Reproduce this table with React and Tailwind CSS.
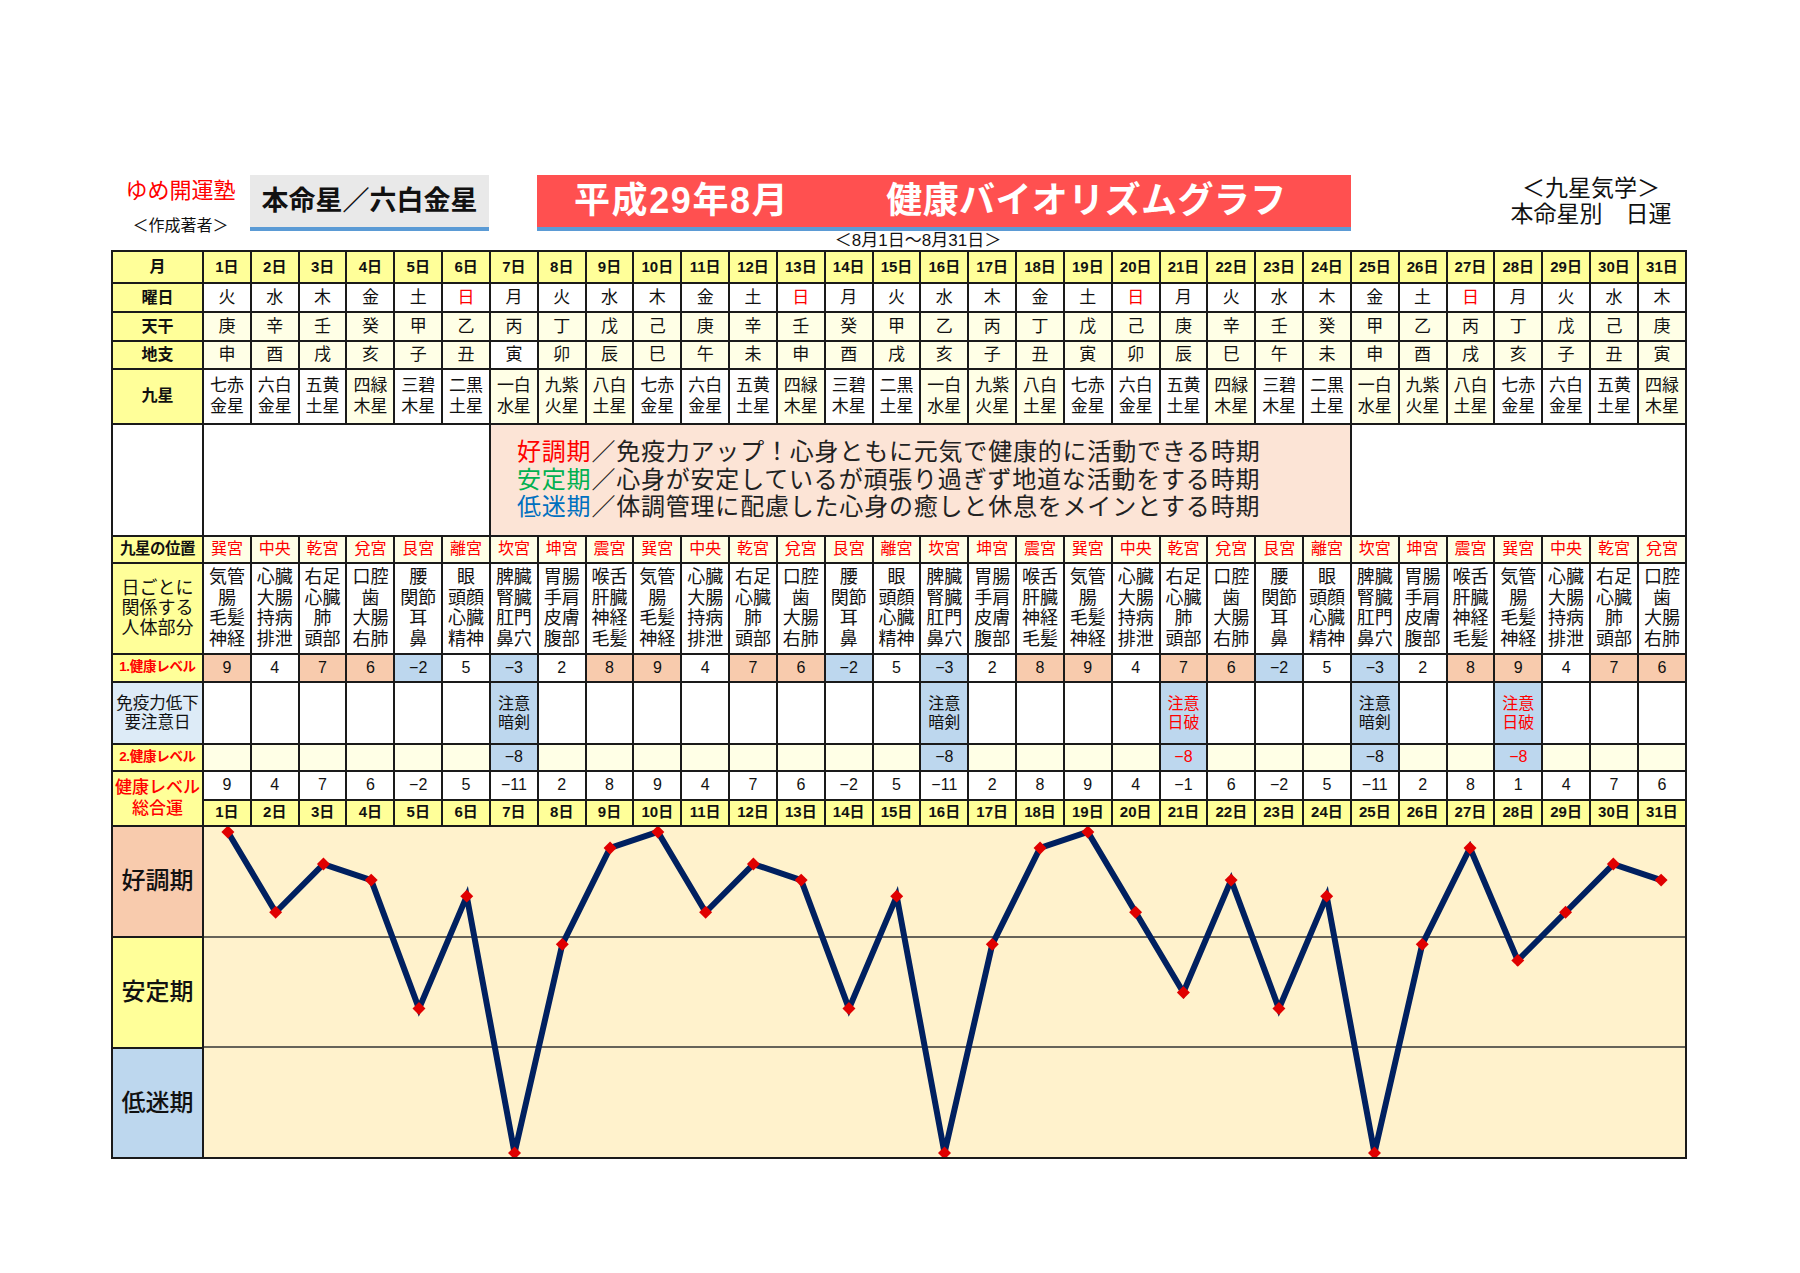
import React from "react";

const days = Array.from({ length: 31 }, (_, i) => i + 1);
const youbi = ["火", "水", "木", "金", "土", "日", "月"];
const kan = ["庚", "辛", "壬", "癸", "甲", "乙", "丙", "丁", "戊", "己"];
const shi = ["申", "酉", "戌", "亥", "子", "丑", "寅", "卯", "辰", "巳", "午", "未"];
const stars = [
  ["七赤", "金星"],
  ["六白", "金星"],
  ["五黄", "土星"],
  ["四緑", "木星"],
  ["三碧", "木星"],
  ["二黒", "土星"],
  ["一白", "水星"],
  ["九紫", "火星"],
  ["八白", "土星"],
];
const paleStars = [3, 6, 7, 8];
const palaces = ["巽宮", "中央", "乾宮", "兌宮", "艮宮", "離宮", "坎宮", "坤宮", "震宮"];
const parts = [
  ["気管", "腸", "毛髪", "神経"],
  ["心臓", "大腸", "持病", "排泄"],
  ["右足", "心臓", "肺", "頭部"],
  ["口腔", "歯", "大腸", "右肺"],
  ["腰", "関節", "耳", "鼻"],
  ["眼", "頭顔", "心臓", "精神"],
  ["脾臓", "腎臓", "肛門", "鼻穴"],
  ["胃腸", "手肩", "皮膚", "腹部"],
  ["喉舌", "肝臓", "神経", "毛髪"],
];
const level1 = [9, 4, 7, 6, -2, 5, -3, 2, 8];
const notices = {
  7: { a: "注意", b: "暗剣", red: false },
  16: { a: "注意", b: "暗剣", red: false },
  21: { a: "注意", b: "日破", red: true },
  25: { a: "注意", b: "暗剣", red: false },
  28: { a: "注意", b: "日破", red: true },
};

const fmt = (v) => (v < 0 ? "−" + Math.abs(v) : String(v));

const cell = "border-2 border-[#1a1a1a] p-0 text-center align-middle";

const HealthChart = () => {
  const w = 1485;
  const h = 333;
  const colW = w / 31;
  const pts = days.map((d) => {
    const v = level1[(d - 1) % 9] + (notices[d] ? -8 : 0);
    return [(d - 0.5) * colW, 5 + (9 - v) * 16.2];
  });

  return (
    <svg
      className="absolute inset-0 w-full h-full"
      viewBox={`0 0 ${w} ${h}`}
      preserveAspectRatio="none"
    >
      <line x1="0" y1="111" x2={w} y2="111" stroke="#333" strokeWidth="1.5" />
      <line x1="0" y1="222" x2={w} y2="222" stroke="#333" strokeWidth="1.5" />
      <polyline
        points={pts.map((p) => p.join(",")).join(" ")}
        fill="none"
        stroke="#002060"
        strokeWidth="6"
        strokeLinejoin="miter"
      />
      {pts.map(([x, y], i) => (
        <polygon
          key={i}
          points={`${x},${y - 6.5} ${x + 6.5},${y} ${x},${y + 6.5} ${x - 6.5},${y}`}
          fill="#e00000"
        />
      ))}
    </svg>
  );
};

const App = () => {
  return (
    <div className="w-[1800px] h-[1273px] bg-white font-['Liberation_Sans','Noto_Sans_CJK_JP',sans-serif] text-[#111]">
      <div className="w-[1576px] ml-[111px] pt-[175px]">
        {/* header */}
        <div className="flex items-start h-[56px]">
          <div className="w-[139px] flex flex-col items-center">
            <div className="mt-[4px] text-[22px] leading-[24px] text-[#ff0000]">ゆめ開運塾</div>
            <div className="mt-[14px] text-[16px] leading-[18px]">＜作成著者＞</div>
          </div>
          <div className="w-[239px] h-[56px] bg-[#e9e9e9] border-b-[4px] border-[#5b9bd5] flex items-center justify-center text-[27px] font-bold">
            本命星／六白金星
          </div>
          <div className="ml-[48px] w-[814px] h-[56px] bg-[#ff5050] border-b-[4px] border-[#5b9bd5] flex items-center pl-[37px] text-white text-[36px] font-bold">
            <span className="tracking-[1.6px]">平成29年8月</span>
            <span className="ml-[97px] tracking-[0.4px]">健康バイオリズムグラフ</span>
          </div>
          <div className="ml-[145px] w-[190px] text-center text-[23px] leading-[26px]">
            <div>＜九星気学＞</div>
            <div>本命星別　日運</div>
          </div>
        </div>
        <div className="h-[19px] pl-[38px] text-center text-[17px] leading-[19px]">
          ＜8月1日～8月31日＞
        </div>

        {/* table */}
        <table className="w-[1576px] table-fixed border-collapse border-2 border-[#1a1a1a]">
          <colgroup>
            <col className="w-[91px]" />
            {days.map((d) => (
              <col key={d} />
            ))}
          </colgroup>
          <tbody>
            <tr>
              <td className={`${cell} h-[32px] bg-[#ffff99] text-[16px] font-bold`}>月</td>
              {days.map((d) => (
                <td key={d} className={`${cell} bg-[#ffff99] text-[15px] font-bold`}>
                  {d}日
                </td>
              ))}
            </tr>
            <tr>
              <td className={`${cell} h-[29px] bg-[#ffff99] text-[16px] font-bold`}>曜日</td>
              {days.map((d) => {
                const y = youbi[(d - 1) % 7];
                return (
                  <td
                    key={d}
                    className={`${cell} bg-white text-[17px] ${y === "日" ? "text-[#ff0000]" : ""}`}
                  >
                    {y}
                  </td>
                );
              })}
            </tr>
            <tr>
              <td className={`${cell} h-[29px] bg-[#ffff99] text-[16px] font-bold`}>天干</td>
              {days.map((d) => (
                <td key={d} className={`${cell} bg-[#ffffe6] text-[17px]`}>
                  {kan[(d - 1) % 10]}
                </td>
              ))}
            </tr>
            <tr>
              <td className={`${cell} h-[27px] bg-[#ffff99] text-[16px] font-bold`}>地支</td>
              {days.map((d) => (
                <td
                  key={d}
                  className={`${cell} text-[17px] ${d === 7 ? "bg-white" : "bg-[#ffffe6]"}`}
                >
                  {shi[(d - 1) % 12]}
                </td>
              ))}
            </tr>
            <tr>
              <td className={`${cell} h-[55px] bg-[#ffff99] text-[16px] font-bold`}>九星</td>
              {days.map((d) => {
                const i = (d - 1) % 9;
                return (
                  <td
                    key={d}
                    className={`${cell} text-[17px] leading-[21px] ${
                      paleStars.includes(i) ? "bg-[#ffffe6]" : "bg-white"
                    }`}
                  >
                    <div>{stars[i][0]}</div>
                    <div>{stars[i][1]}</div>
                  </td>
                );
              })}
            </tr>
            <tr>
              <td className={`${cell} h-[112px] bg-white`}></td>
              <td colSpan={6} className={`${cell} bg-white`}></td>
              <td colSpan={18} className={`${cell} bg-[#fce4d6] text-left`}>
                <div className="pl-[26px] text-[24px] leading-[27.5px] tracking-[0.8px] text-[#222]">
                  <div>
                    <span className="text-[#ff0000]">好調期</span>／免疫力アップ！心身ともに元気で健康的に活動できる時期
                  </div>
                  <div>
                    <span className="text-[#00b050]">安定期</span>／心身が安定しているが頑張り過ぎず地道な活動をする時期
                  </div>
                  <div>
                    <span className="text-[#0070c0]">低迷期</span>／体調管理に配慮した心身の癒しと休息をメインとする時期
                  </div>
                </div>
              </td>
              <td colSpan={7} className={`${cell} bg-white`}></td>
            </tr>
            <tr>
              <td className={`${cell} h-[27px] bg-[#ffff99] text-[15.5px] font-bold tracking-[-0.5px]`}>
                九星の位置
              </td>
              {days.map((d) => (
                <td key={d} className={`${cell} bg-[#ffffe6] text-[16px] text-[#ff0000]`}>
                  {palaces[(d - 1) % 9]}
                </td>
              ))}
            </tr>
            <tr>
              <td className={`${cell} h-[91px] bg-[#ffff99] text-[18px] leading-[20px]`}>
                <div>日ごとに</div>
                <div>関係する</div>
                <div>人体部分</div>
              </td>
              {days.map((d) => (
                <td key={d} className={`${cell} bg-white text-[18px] leading-[20.5px]`}>
                  {parts[(d - 1) % 9].map((p, i) => (
                    <div key={i}>{p}</div>
                  ))}
                </td>
              ))}
            </tr>
            <tr>
              <td className={`${cell} h-[28px] bg-[#ffff99] text-[13.5px] font-bold text-[#ff0000] tracking-[-0.3px]`}>
                1.健康レベル
              </td>
              {days.map((d) => {
                const v = level1[(d - 1) % 9];
                const bg = v >= 6 ? "bg-[#f8cbad]" : v < 0 ? "bg-[#bdd7ee]" : "bg-white";
                return (
                  <td key={d} className={`${cell} ${bg} text-[16px]`}>
                    {fmt(v)}
                  </td>
                );
              })}
            </tr>
            <tr>
              <td className={`${cell} h-[62px] bg-[#ddebf7] text-[16.5px] leading-[19px]`}>
                <div>免疫力低下</div>
                <div>要注意日</div>
              </td>
              {days.map((d) => {
                const n = notices[d];
                return (
                  <td
                    key={d}
                    className={`${cell} text-[16px] leading-[19px] ${
                      n ? "bg-[#bdd7ee]" : "bg-white"
                    } ${n && n.red ? "text-[#ff0000]" : ""}`}
                  >
                    {n && (
                      <>
                        <div>{n.a}</div>
                        <div>{n.b}</div>
                      </>
                    )}
                  </td>
                );
              })}
            </tr>
            <tr>
              <td className={`${cell} h-[27px] bg-[#ffff99] text-[13.5px] font-bold text-[#ff0000] tracking-[-0.3px]`}>
                2.健康レベル
              </td>
              {days.map((d) => {
                const n = notices[d];
                return (
                  <td
                    key={d}
                    className={`${cell} text-[16px] ${n ? "bg-[#bdd7ee]" : "bg-[#ffffe6]"} ${
                      n && n.red ? "text-[#ff0000]" : ""
                    }`}
                  >
                    {n ? "−8" : ""}
                  </td>
                );
              })}
            </tr>
            <tr>
              <td
                rowSpan={2}
                className={`${cell} bg-[#ffff99] text-[17px] leading-[21px] font-medium text-[#ff0000]`}
              >
                <div>健康レベル</div>
                <div>総合運</div>
              </td>
              {days.map((d) => {
                const v = level1[(d - 1) % 9] + (notices[d] ? -8 : 0);
                return (
                  <td key={d} className={`${cell} h-[29px] bg-white text-[16px]`}>
                    {fmt(v)}
                  </td>
                );
              })}
            </tr>
            <tr>
              {days.map((d) => (
                <td key={d} className={`${cell} h-[26px] bg-[#ffff99] text-[15px] font-bold`}>
                  {d}日
                </td>
              ))}
            </tr>
            <tr>
              <td className={`${cell} h-[111px] bg-[#f8cbad] text-[24px] font-medium`}>好調期</td>
              <td colSpan={31} rowSpan={3} className={`${cell} relative bg-[#fff2cc]`}>
                <HealthChart />
              </td>
            </tr>
            <tr>
              <td className={`${cell} h-[111px] bg-[#ffff99] text-[24px] font-medium`}>安定期</td>
            </tr>
            <tr>
              <td className={`${cell} h-[110px] bg-[#bdd7ee] text-[24px] font-medium`}>低迷期</td>
            </tr>
          </tbody>
        </table>
      </div>
    </div>
  );
};

export default App;
